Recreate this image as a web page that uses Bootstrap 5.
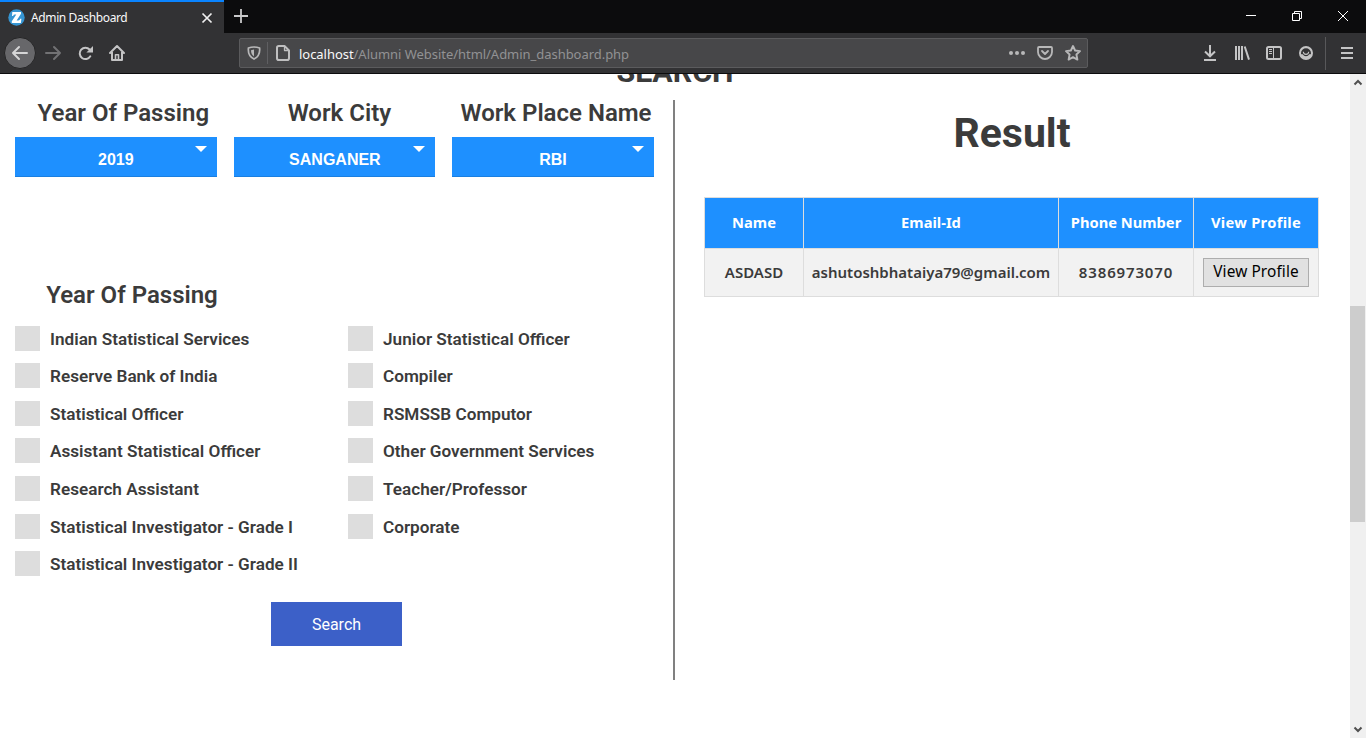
<!DOCTYPE html>
<html lang="en">
<head>
<meta charset="utf-8">
<title>Admin Dashboard</title>
<link href="https://cdn.jsdelivr.net/npm/bootstrap@5.3.0/dist/css/bootstrap.min.css" rel="stylesheet">
<style>
body{width:1366px;height:738px;overflow:hidden;background:#fff;color:#3b3b3b;font-family:Roboto,sans-serif}
svg{display:block;flex:none;overflow:visible}
.tabstrip{height:33px;background:#0c0c0d;font-family:"Noto Sans",sans-serif}
.tab-on{width:224px;height:33px;background:#323234;border-top:2px solid #0a84ff;color:#f9f9fa;font-size:12px;padding:0 12px 0 8px}
.tab-on span{margin-left:6px;letter-spacing:-.38px}
.tools{height:41px;background:#323234;border-bottom:1px solid #0c0c0d;color:#c2c2c3;padding:0 13px 0 4px}
.back{width:32px;height:32px;flex:none;background:#67676a;border:1px solid #252526}
.urlbar{width:849px;height:30px;flex:none;margin-left:114px;background:#474749;border:1px solid #5b5b5d;border-radius:2px;color:#b8b8b9;padding:0 6px 0 7px;font-family:"Noto Sans",sans-serif;font-size:13px}
.addr{color:#929294;letter-spacing:-.04px;padding-top:3px}
.addr b{font-weight:400;color:#f9f9fa}
.viewport{height:664px}
.content{width:1350px;flex:none;overflow:hidden}
.clipped{height:26px;overflow:hidden;text-align:center}
.clipped h1{font-size:30.4px;line-height:38px;font-weight:700;margin:-21px 0 0}
.left{width:675px;flex:none;height:580px;border-right:2px solid #808080;padding-left:15px}
.ttl{font-size:24px;line-height:28px;font-weight:600;margin:0;white-space:nowrap}
.pick{width:201.6px}
.pick .ttl{height:37px;line-height:26px;text-align:center}
.sel{height:40px;background:#1e90ff;border-bottom:1px solid #1a7fe0;color:#fff;font:700 16px/46px "Liberation Sans",sans-serif;text-align:center;position:relative}
.sel::after{content:"";position:absolute;right:10px;top:9px;border:6px solid transparent;border-top-color:#fff;border-bottom:0}
.opts{width:333px;flex:none;gap:12.55px}
.opt{height:25px;font-size:17.17px;font-weight:600;line-height:26px;white-space:nowrap;gap:10px}
.box{width:25px;height:25px;background:#ddd;flex:none}
.go{width:131px;height:44px;border:0;border-radius:0;background:#3c60c8;color:#fff;font-size:16px;padding:2px 0 0;margin:25.8px 0 0 256px}
.go:hover{background:#3c60c8}
.result h2{font-size:41px;line-height:48px;font-weight:700;margin:9px 0 0;padding-right:1px}
.grid{width:615px;margin:40px 0 0 29px;table-layout:fixed;border-collapse:collapse;font-family:"Noto Sans",sans-serif;font-size:15px;font-weight:600;text-align:center;white-space:nowrap}
.grid th,.grid td{border:1px solid #ddd;padding:0}
.grid th{height:51px;background:#1e90ff;color:#fff;font-weight:700;font-size:14.7px;text-align:center;padding-bottom:2px}
.grid td{height:48px;background:#f2f2f2}
.grid .tel{letter-spacing:.85px}
.grid .act{letter-spacing:.3px}
.vp{width:106px;height:29px;border:1px solid #adadad;border-radius:0;background:#e1e1e1;color:#000;padding:0 0 2px;font-family:"Noto Sans",sans-serif;font-size:15.4px;letter-spacing:.1px;line-height:20px}
.sbar{width:16px;flex:none;background:#f0f0f0;padding:4px 0 5px}
.thumb{width:15px;height:216px;background:#cdcdcd}
</style>
</head>
<body>
<header>
<div class="tabstrip d-flex">
 <div class="tab-on d-flex align-items-center">
  <svg width="17" height="17" viewBox="0 0 17 17"><circle cx="8.5" cy="8.5" r="8.2" fill="#3695d2"/><path d="M4.3 3H13V4.8L8.6 11.4H10.3Q11.8 11.4 12.2 9.8H13.4L12.9 14H3.8V12.3L8.3 5.6H6.9Q5.5 5.6 5.1 7H4Z" fill="#fff"/></svg>
  <span>Admin Dashboard</span>
  <svg class="ms-auto" width="10" height="10" viewBox="0 0 10 10"><path d="M.5 .5L9.5 9.5M9.5 .5L.5 9.5" stroke="#f0f0f0" stroke-width="1.7"/></svg>
 </div>
 <svg style="margin:9px 0 0 10px" width="14" height="14" viewBox="0 0 14 14"><path d="M7 0V14M0 7H14" stroke="#c9c9ca" stroke-width="1.8"/></svg>
 <div class="d-flex ms-auto" style="padding:11px 18px 0 0;gap:36px">
  <svg width="10" height="10" viewBox="0 0 10 10"><path d="M0 4.5H10" stroke="#fff"/></svg>
  <svg width="10" height="10" viewBox="0 0 10 10" fill="none" stroke="#fff"><path d="M.5 2.5H7.5V9.5H.5ZM2.5 2.5V.5H9.5V7.5H7.5"/></svg>
  <svg width="10" height="10" viewBox="0 0 10 10"><path d="M0 0L10 10M10 0L0 10" stroke="#fff"/></svg>
 </div>
</div>
<div class="tools d-flex align-items-center">
 <div class="back rounded-circle d-flex align-items-center justify-content-center"><svg width="16" height="14" viewBox="0 0 16 14" fill="none" stroke="#d5d5d6" stroke-width="2" stroke-linecap="round" stroke-linejoin="round"><path d="M7 1L1 7L7 13M1 7H15"/></svg></div>
 <svg style="margin-left:9px" width="16" height="14" viewBox="0 0 16 14" fill="none" stroke="#727274" stroke-width="2" stroke-linecap="round" stroke-linejoin="round"><path d="M9 1L15 7L9 13M1 7H15"/></svg>
 <svg style="margin-left:17px" width="15" height="15" viewBox="0 0 15 15"><path d="M12.3 10.3A5.7 5.7 0 1 1 11.6 3.5" fill="none" stroke="#c4c4c5" stroke-width="2" stroke-linecap="round"/><path d="M15 0V6.6H8.4Z" fill="#c4c4c5"/></svg>
 <svg style="margin-left:16px" width="16" height="16" viewBox="0 0 16 16" fill="none" stroke="#c4c4c5" stroke-width="2" stroke-linecap="round" stroke-linejoin="round"><path d="M1 8L8 1L15 8M3 7V15H13V7"/><path d="M6.5 15V9.8H9.5V15" stroke-width="1.6"/></svg>
 <div class="urlbar d-flex align-items-center">
  <svg width="14" height="14" viewBox="0 0 14 14"><path d="M7 1Q10 1 12.6 2Q13.4 10 7 13Q.6 10 1.4 2Q4 1 7 1Z" fill="none" stroke="#b8b8b9" stroke-width="1.7"/><path d="M7 3.6V10.4Q4 8.4 4 4.2Z" fill="#b8b8b9"/></svg>
  <i class="d-block" style="width:1px;height:22px;background:#5f5f62;margin:0 8px 0 6px"></i>
  <svg width="14" height="16" viewBox="0 0 14 16" fill="none" stroke="#bfbfc0" stroke-width="2" stroke-linejoin="round"><path d="M8.5 1H2.8Q1 1 1 2.8V13.2Q1 15 2.8 15H11.2Q13 15 13 13.2V5.5Z"/><path d="M8.5 1V5.5H13" stroke-width="1.3"/></svg>
  <div class="addr" style="margin-left:9px"><b>localhost</b>/Alumni Website/html/Admin_dashboard.php</div>
  <svg class="ms-auto" width="16" height="4" viewBox="0 0 16 4" fill="#b8b8b9"><circle cx="2" cy="2" r="2"/><circle cx="8" cy="2" r="2"/><circle cx="14" cy="2" r="2"/></svg>
  <svg style="margin-left:12px" width="16" height="14" viewBox="0 0 16 14" fill="none" stroke="#b8b8b9" stroke-width="1.8" stroke-linecap="round" stroke-linejoin="round"><path d="M2 1H14Q15 1 15 2V6Q15 9 12.8 11Q10.7 13 8 13T3.2 11Q1 9 1 6V2Q1 1 2 1Z"/><path d="M5 5L8 8L11 5"/></svg>
  <svg style="margin-left:12px" width="16" height="16" viewBox="0 0 16 16" fill="none" stroke="#b8b8b9" stroke-width="1.9" stroke-linejoin="round"><path d="M8 1L10.1 5.5L15 6.1L11.4 9.5L12.4 14.6L8 12.2L3.6 14.6L4.6 9.5L1 6.1L5.9 5.5Z"/></svg>
 </div>
 <svg class="ms-auto" width="12" height="16" viewBox="0 0 12 16" fill="none" stroke="#c4c4c5" stroke-width="2"><path d="M6 0V11M1 6.5L6 11.3L11 6.5M0 15H12"/></svg>
 <svg style="margin-left:19px" width="15" height="14" viewBox="0 0 15 14" fill="none" stroke="#c4c4c5" stroke-width="2"><path d="M1 0V14M4 0V14M7 0V14M9.7 .5L14 13.6" /></svg>
 <svg style="margin-left:16px" width="16" height="14" viewBox="0 0 16 14" fill="none" stroke="#c4c4c5"><rect x="1" y="1" width="14" height="12" rx="1.5" stroke-width="2"/><path d="M7.5 1V13"/><path d="M3 3.5H6M3 5.5H6M3 7.5H6"/></svg>
 <svg style="margin-left:17px" width="14" height="14" viewBox="0 0 14 14"><circle cx="7" cy="7" r="7" fill="#c4c4c5"/><path d="M2 7.2A5 5 0 0 1 12 7.2Q12 8.2 11.6 8.2H10.2Q9.3 10.2 7 10.2T3.8 8.2H2.4Q2 8.2 2 7.2Z" fill="#323234"/><path d="M4.3 5.8Q4.4 8.4 7 8.4T9.7 5.8" fill="none" stroke="#c4c4c5" stroke-width="1.1"/></svg>
 <i class="d-block" style="width:1px;height:33px;background:#58585a;margin:0 15px 0 12px"></i>
 <svg width="12" height="12" viewBox="0 0 12 12"><path d="M0 1H12M0 6H12M0 11H12" stroke="#c4c4c5" stroke-width="2"/></svg>
</div>
</header>
<div class="viewport d-flex">
<main class="content">
 <div class="clipped"><h1>SEARCH</h1></div>
 <div class="d-flex">
  <section class="left">
   <div class="d-flex" style="gap:17px">
    <div class="pick"><h3 class="ttl" style="padding-left:15px">Year Of Passing</h3><div class="sel">2019</div></div>
    <div class="pick"><h3 class="ttl" style="padding-left:10px">Work City</h3><div class="sel" style="padding-left:1px">SANGANER</div></div>
    <div class="pick"><h3 class="ttl" style="padding-left:6px">Work Place Name</h3><div class="sel">RBI</div></div>
   </div>
   <h3 class="ttl" style="margin:104px 0 16.8px 31.2px">Year Of Passing</h3>
   <div class="d-flex">
    <div class="opts d-flex flex-column">
     <label class="opt d-flex"><i class="box"></i>Indian Statistical Services</label>
     <label class="opt d-flex"><i class="box"></i>Reserve Bank of India</label>
     <label class="opt d-flex"><i class="box"></i>Statistical Officer</label>
     <label class="opt d-flex"><i class="box"></i>Assistant Statistical Officer</label>
     <label class="opt d-flex"><i class="box"></i>Research Assistant</label>
     <label class="opt d-flex"><i class="box"></i>Statistical Investigator - Grade I</label>
     <label class="opt d-flex"><i class="box"></i>Statistical Investigator - Grade II</label>
    </div>
    <div class="opts d-flex flex-column">
     <label class="opt d-flex"><i class="box"></i>Junior Statistical Officer</label>
     <label class="opt d-flex"><i class="box"></i>Compiler</label>
     <label class="opt d-flex"><i class="box"></i>RSMSSB Computor</label>
     <label class="opt d-flex"><i class="box"></i>Other Government Services</label>
     <label class="opt d-flex"><i class="box"></i>Teacher/Professor</label>
     <label class="opt d-flex"><i class="box"></i>Corporate</label>
    </div>
   </div>
   <button class="btn go">Search</button>
  </section>
  <section class="result flex-fill">
   <h2 class="text-center">Result</h2>
   <table class="grid">
    <colgroup><col style="width:99px"><col style="width:255px"><col style="width:135px"><col style="width:125px"></colgroup>
    <tr><th>Name</th><th>Email-Id</th><th>Phone Number</th><th class="act">View Profile</th></tr>
    <tr><td>ASDASD</td><td>ashutoshbhataiya79@gmail.com</td><td class="tel">8386973070</td><td><button class="btn vp">View Profile</button></td></tr>
   </table>
  </section>
 </div>
</main>
<aside class="sbar d-flex flex-column">
 <svg style="margin:1px 0 0 4px" width="8" height="7" viewBox="0 0 8 7"><path d="M.5 5.5L4 2L7.5 5.5" fill="none" stroke="#505050" stroke-width="2"/></svg>
 <div class="thumb" style="margin-top:220px"></div>
 <svg class="mt-auto" style="margin-left:4px" width="8" height="7" viewBox="0 0 8 7"><path d="M.5 1.5L4 5L7.5 1.5" fill="none" stroke="#505050" stroke-width="2"/></svg>
</aside>
</div>
<script src="https://cdn.jsdelivr.net/npm/bootstrap@5.3.0/dist/js/bootstrap.bundle.min.js"></script>
</body>
</html>
